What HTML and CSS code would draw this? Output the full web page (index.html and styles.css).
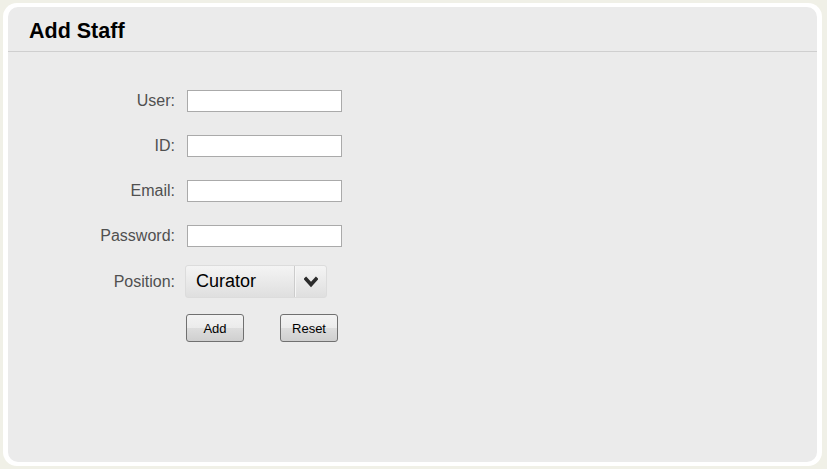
FILE: index.html
```html
<!DOCTYPE html>
<html>
<head>
<meta charset="utf-8">
<link rel="stylesheet" href="styles.css">
</head>
<body>
<div class="frame">
  <div class="panel">
    <div class="header"><h1 class="title">Add Staff</h1></div>
    <form class="form">
      <div class="row"><label class="label">User:</label><input class="input" type="text"></div>
      <div class="row"><label class="label">ID:</label><input class="input" type="text"></div>
      <div class="row"><label class="label">Email:</label><input class="input" type="text"></div>
      <div class="row"><label class="label">Password:</label><input class="input" type="password"></div>
      <div class="row row-select"><label class="label">Position:</label>
        <div class="select"><span class="select-text">Curator</span><span class="select-arrow"><svg width="14" height="12" viewBox="0 0 14 12"><polyline points="2,3 7,8.5 12,3" fill="none" stroke="#2b2b2b" stroke-width="3.6" stroke-linecap="square"/></svg></span></div>
      </div>
      <div class="row row-buttons"><span></span>
        <div class="buttons"><button type="button" class="btn">Add</button><button type="button" class="btn">Reset</button></div>
      </div>
    </form>
  </div>
</div>
</body>
</html>
```
FILE: styles.css
```css
html, body { margin: 0; padding: 0; }
body {
  background: #f0f0e7;
  padding: 3px 5px 3px 3px;
  font-family: "Liberation Sans", Arial, sans-serif;
}
.frame {
  background: #ffffff;
  border-radius: 14px;
  padding: 4px 5px 4px 5px;
  height: 455px;
}
.panel {
  background: #ebebeb;
  border-radius: 10px;
  height: 455px;
  box-sizing: border-box;
}
.header {
  height: 45px;
  border-bottom: 1px solid #cfcfcf;
  box-sizing: border-box;
  display: flex;
  align-items: center;
  padding-left: 21px;
}
.title {
  margin: 0;
  font-size: 21.5px;
  font-weight: bold;
  color: #000;
  line-height: 1;
  padding-top: 6px;
}
.form {
  padding-top: 38px;
  display: flex;
  flex-direction: column;
}
.row {
  display: grid;
  grid-template-columns: 167px 1fr;
  column-gap: 12px;
  align-items: center;
  height: 22px;
  margin-bottom: 23px;
}
.label {
  text-align: right;
  font-size: 16px;
  color: #505050;
}
.input {
  width: 155px;
  height: 22px;
  box-sizing: border-box;
  border: 1px solid #aaaaaa;
  background: #fff;
  margin: 0;
  padding: 2px 4px;
}
.row-select {
  height: 33px;
  margin-top: -5px;
  margin-bottom: 16px;
  column-gap: 10px;
}
.select {
  width: 142px;
  height: 33px;
  box-sizing: border-box;
  border: 1px solid #dcdcdc;
  border-radius: 3px;
  background: linear-gradient(#f4f4f4, #dfdfdf);
  display: flex;
  align-items: center;
}
.select-text {
  flex: 1;
  font-size: 18px;
  color: #000;
  padding-left: 10px;
}
.select-arrow {
  width: 31px;
  height: 100%;
  border-left: 1px solid #cccccc;
  box-shadow: inset 1px 0 0 #f6f6f6;
  display: flex;
  align-items: center;
  justify-content: center;
}
.row-buttons {
  height: 28px;
}
.buttons {
  display: flex;
  gap: 36px;
  margin-left: -1px;
}
.btn {
  width: 58px;
  height: 28px;
  box-sizing: border-box;
  border: 1px solid #707070;
  border-radius: 3px;
  background: linear-gradient(#f3f3f3 0%, #ebebeb 50%, #dddddd 51%, #cfcfcf 100%);
  font-family: "Liberation Sans", Arial, sans-serif;
  font-size: 13px;
  color: #000;
  padding: 0;
  margin: 0;
}
```
